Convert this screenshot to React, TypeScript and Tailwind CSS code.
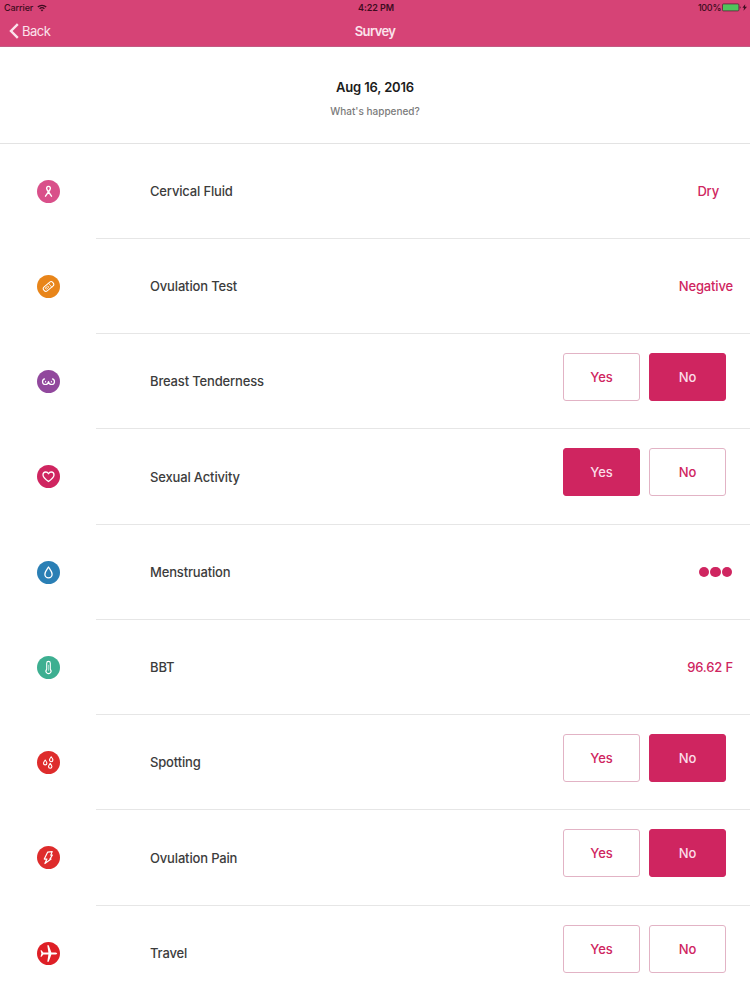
import { useState, type ReactNode } from 'react'

type Answer = 'yes' | 'no' | null

type Item = {
  label: string
  color: string
  icon: ReactNode
  value?: string
  valueClass?: string
  dots?: number
  answer?: Answer
}

// Glyphs are drawn on a 23x23 grid, centred on the coloured disc.
const items: Item[] = [
  {
    label: 'Cervical Fluid',
    color: 'bg-[#d9508a]',
    value: 'Dry',
    valueClass: 'pr-[31px]',
    icon: <path d="M8.5 16.2 12.8 10c1.2-2 .4-3.6-1.3-3.6s-2.5 1.6-1.3 3.6l4.3 6.2" strokeWidth="1.4" />,
  },
  {
    label: 'Ovulation Test',
    color: 'bg-[#e8851a]',
    value: 'Negative',
    icon: (
      <g transform="rotate(-40 11.5 11.5)">
        <rect x="5.6" y="8.9" width="11.8" height="5.2" rx="2.4" />
        <rect x="8" y="10.7" width="3.6" height="1.6" rx=".6" strokeWidth=".7" />
        <path d="M13.6 9v5" strokeWidth=".7" />
      </g>
    ),
  },
  {
    label: 'Breast Tenderness',
    color: 'bg-[#91489d]',
    answer: 'no',
    icon: (
      <>
        <path d="M7.5 8.9c-3 1-2.5 5.6.9 5.6 2 0 2.9-1.2 3.1-2.9.2 1.7 1.1 2.9 3.1 2.9 3.4 0 3.9-4.6.9-5.6" strokeWidth="1.2" />
        <path d="M8.6 11.3v.8M14.4 11.3v.8" />
      </>
    ),
  },
  {
    label: 'Sexual Activity',
    color: 'bg-[#cf2560]',
    answer: 'yes',
    icon: (
      <path
        d="M11.5 16.6C8.3 14.2 6 12.4 6 10c0-1.8 1.2-3 2.8-3 1.2 0 2.1.6 2.7 1.7C12.1 7.6 13 7 14.2 7 15.8 7 17 8.2 17 10c0 2.4-2.3 4.2-5.5 6.6Z"
        strokeWidth="1.3"
      />
    ),
  },
  {
    label: 'Menstruation',
    color: 'bg-[#2a7fb5]',
    dots: 3,
    icon: <path d="M11.5 6c2 3 3.6 4.9 3.6 7.2a3.6 3.6 0 0 1-7.2 0c0-2.3 1.6-4.2 3.6-7.2Z" strokeWidth="1.3" />,
  },
  {
    label: 'BBT',
    color: 'bg-[#3daf91]',
    value: '96.62 F',
    icon: (
      <>
        <path d="M9.7 13.3V7.2a1.8 1.8 0 0 1 3.6 0v6.1a2.5 2.5 0 1 1-3.6 0Z" strokeWidth="1.1" />
        <path d="M11.5 9.2v5.2" strokeWidth=".5" />
      </>
    ),
  },
  {
    label: 'Spotting',
    color: 'bg-[#de2c2c]',
    answer: 'no',
    icon: (
      <g strokeWidth="1.1">
        <path d="M8.2 9c1.3 1.8 1.7 2.4 1.7 3.2a1.7 1.7 0 0 1-3.4 0c0-.8.4-1.4 1.7-3.2Z" />
        <path d="M14.2 5.8c1.3 1.8 1.7 2.4 1.7 3.2a1.7 1.7 0 0 1-3.4 0c0-.8.4-1.4 1.7-3.2Z" />
        <path d="M13.2 12.4c1.3 1.8 1.7 2.4 1.7 3.2a1.7 1.7 0 0 1-3.4 0c0-.8.4-1.4 1.7-3.2Z" />
      </g>
    ),
  },
  {
    label: 'Ovulation Pain',
    color: 'bg-[#de2c2c]',
    answer: 'no',
    icon: <path d="m10.6 6.2 4.6-.6-1.4 3.5 1.6-.1-2.5 4.1h1.2l-6.2 4.4 2-4.5-2.6.1Z" strokeWidth="1.2" />,
  },
  {
    label: 'Travel',
    color: 'bg-[#de1f26]',
    answer: null,
    icon: (
      <path
        d="M20.2 11.5c0-.7-1.2-1.1-2.6-1.1h-3.2L11.7 3.2h-1.4l1.1 7.2H6.3L4.5 8.2h-1l.9 3.3-.9 3.3h1l1.8-2.2h5.1l-1.1 7.2h1.4l2.7-7.2h3.2c1.4 0 2.6-.4 2.6-1.1Z"
        fill="currentColor"
        stroke="none"
      />
    ),
  },
]

function StatusBar() {
  return (
    <div className="flex h-[15px] items-center justify-between pr-0.5 pl-1 text-[9px] leading-none text-[#3d0c20]">
      <div className="flex flex-1 items-center gap-1 font-medium tracking-[-0.1px]">
        Carrier
        <svg viewBox="0 0 10 8" className="h-2 w-2.5" fill="none" stroke="currentColor" strokeWidth="1.3">
          <path d="M.8 3a6 6 0 0 1 8.4 0M2.6 4.8a3.5 3.5 0 0 1 4.8 0" />
          <path d="m3.7 6 1.3 1.4L6.3 6a2 2 0 0 0-2.6 0Z" fill="currentColor" stroke="none" />
        </svg>
      </div>
      <div className="font-semibold tracking-[-0.05px]">4:22 PM</div>
      <div className="flex flex-1 items-center justify-end">
        <span className="mr-px font-medium tracking-[-0.3px]">100%</span>
        <svg viewBox="0 0 26 9" className="h-[9px] w-[26px]">
          <rect x=".5" y=".9" width="16.4" height="7" rx="1" fill="#4fc45c" stroke="#5c2038" strokeWidth=".8" />
          <path d="M17.8 3.2c1 .3 1 2.1 0 2.4Z" fill="currentColor" />
          <path d="m23.2 1.3-2.8 3.5h1.7l-.6 2.9 3.5-3.9h-2l.2-2.5Z" fill="currentColor" />
        </svg>
      </div>
    </div>
  )
}

function Choice({ label, active, onClick }: { label: string; active: boolean; onClick: () => void }) {
  return (
    <button
      onClick={onClick}
      className={`h-12 w-[77px] rounded-[3px] border pt-px text-[13px] font-medium tracking-[-0.1px] ${
        active ? 'border-[#cf2560] bg-[#cf2560] text-[#fbdde8]' : 'border-[#e2b3c5] bg-white text-[#cf2560]'
      }`}
    >
      {label}
    </button>
  )
}

function Row({ item, last }: { item: Item; last: boolean }) {
  const [answer, setAnswer] = useState<Answer>(item.answer ?? null)

  return (
    <div className="flex h-[95.25px]">
      <div className="flex w-24 shrink-0 items-center justify-center">
        <div className={`size-[23px] rounded-full ${item.color}`}>
          <svg
            viewBox="0 0 23 23"
            className="size-full text-white"
            fill="none"
            stroke="currentColor"
            strokeWidth="1"
            strokeLinecap="round"
            strokeLinejoin="round"
          >
            {item.icon}
          </svg>
        </div>
      </div>
      <div
        className={`flex flex-1 items-center justify-between pl-[54px] text-[13px] font-medium tracking-[-0.16px] ${
          last ? '' : 'border-b border-[#e6e6e6]'
        }`}
      >
        <span className="pt-0.5 text-[#3c3c3c]">{item.label}</span>
        {item.value && (
          <span className={`pt-0.5 text-[#cf2560] ${item.valueClass ?? 'pr-[17px]'}`}>{item.value}</span>
        )}
        {item.dots && (
          <div className="flex gap-px pt-px pr-[18px]">
            {Array.from({ length: item.dots }, (_, i) => (
              <span key={i} className="size-[10.5px] rounded-full bg-[#cf2560]" />
            ))}
          </div>
        )}
        {item.answer !== undefined && (
          <div className="flex gap-[9px] pr-6 pb-[8.5px]">
            <Choice label="Yes" active={answer === 'yes'} onClick={() => setAnswer('yes')} />
            <Choice label="No" active={answer === 'no'} onClick={() => setAnswer('no')} />
          </div>
        )}
      </div>
    </div>
  )
}

export default function App() {
  return (
    <div className="h-[1000px] w-[750px] overflow-hidden bg-white font-['Inter',sans-serif]">
      <header className="h-[47px] border-b border-[#c25b83] bg-[#d64376]">
        <StatusBar />
        <div className="flex h-8 items-center px-[9px] text-[13px] text-[#fbe3ec]">
          <button className="flex flex-1 items-center gap-[3px] tracking-[-0.5px]">
            <svg viewBox="0 0 10 16" className="h-4 w-2.5" fill="none" stroke="currentColor" strokeWidth="2.4">
              <path d="M8.8 1.2 2 8l6.8 6.8" />
            </svg>
            <span className="pt-px">Back</span>
          </button>
          <h1 className="pt-px font-semibold tracking-[-0.6px]">Survey</h1>
          <div className="flex-1" />
        </div>
      </header>
      <section className="flex h-[96.5px] flex-col items-center border-b border-[#e3e3e3] pt-[31px] text-center">
        <h2 className="text-[13px] leading-[18px] font-semibold tracking-[-0.15px] text-[#1c1c1c]">Aug 16, 2016</h2>
        <p className="mt-[9px] text-[10px] leading-3 font-medium text-[#7b7b7b]">What&apos;s happened?</p>
      </section>
      <main>
        {items.map((item, i) => (
          <Row key={item.label} item={item} last={i === items.length - 1} />
        ))}
      </main>
    </div>
  )
}
